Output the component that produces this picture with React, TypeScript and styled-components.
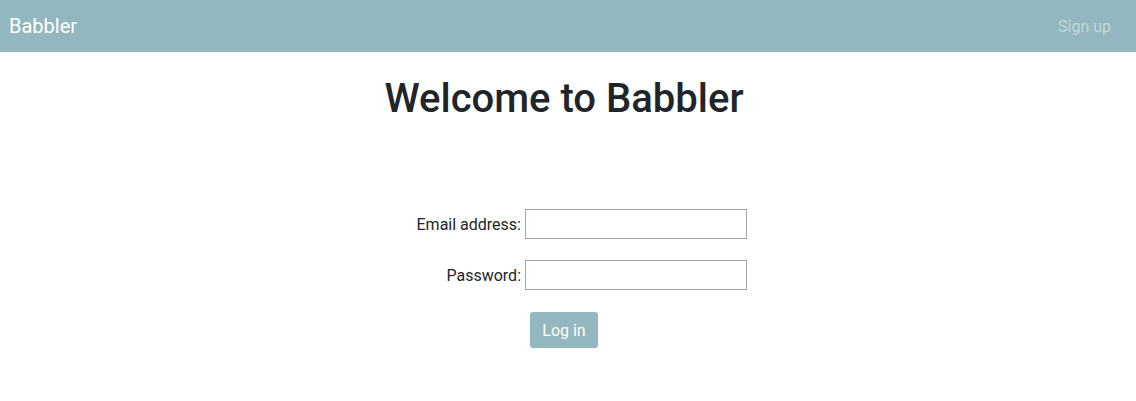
import React from "react";
import styled, { createGlobalStyle } from "styled-components";

const Global = createGlobalStyle`
  html, body { margin: 0; padding: 0; background: #fff; }
  body { font-family: Roboto, "Liberation Sans", sans-serif; color: #212529; font-size: 16px; }
  * { box-sizing: border-box; }
`;

const Navbar = styled.nav`
  height: 52px;
  background: #93b7be;
  display: flex;
  align-items: center;
  justify-content: space-between;
  padding: 0 25px 0 9px;
`;

const Brand = styled.a`
  color: #fff;
  font-size: 20px;
  text-decoration: none;
`;

const NavLink = styled.a`
  color: rgba(255, 255, 255, 0.45);
  font-size: 16px;
  text-decoration: none;
`;

const Main = styled.main`
  display: flex;
  flex-direction: column;
  align-items: center;
`;

const Title = styled.h1`
  margin: 23px 0 0;
  font-size: 40px;
  font-weight: 500;
  line-height: 1.2;
  transform: translateX(-4px);
`;

const Form = styled.form`
  margin-top: 86px;
  display: grid;
  grid-template-columns: 521px 222px;
  column-gap: 4px;
  row-gap: 21px;
  align-items: center;
  align-self: flex-start;
`;

const Label = styled.label`
  text-align: right;
  font-size: 16px;
`;

const Input = styled.input`
  width: 222px;
  height: 30px;
  border: 1px solid #a3a3a3;
  padding: 2px 4px;
  font: inherit;
`;

const Button = styled.button`
  margin-top: 22px;
  height: 36px;
  padding: 0 12px;
  background: #93b7be;
  color: #fff;
  border: none;
  border-radius: 3px;
  font-family: Roboto, "Liberation Sans", sans-serif;
  font-size: 16px;
  transform: translateX(-4px);
`;

export default function App() {
  return (
    <>
      <Global />
      <Navbar>
        <Brand href="#">Babbler</Brand>
        <NavLink href="#">Sign up</NavLink>
      </Navbar>
      <Main>
        <Title>Welcome to Babbler</Title>
        <Form>
          <Label htmlFor="email">Email address:</Label>
          <Input id="email" type="email" />
          <Label htmlFor="password">Password:</Label>
          <Input id="password" type="password" />
        </Form>
        <Button type="button">Log in</Button>
      </Main>
    </>
  );
}
